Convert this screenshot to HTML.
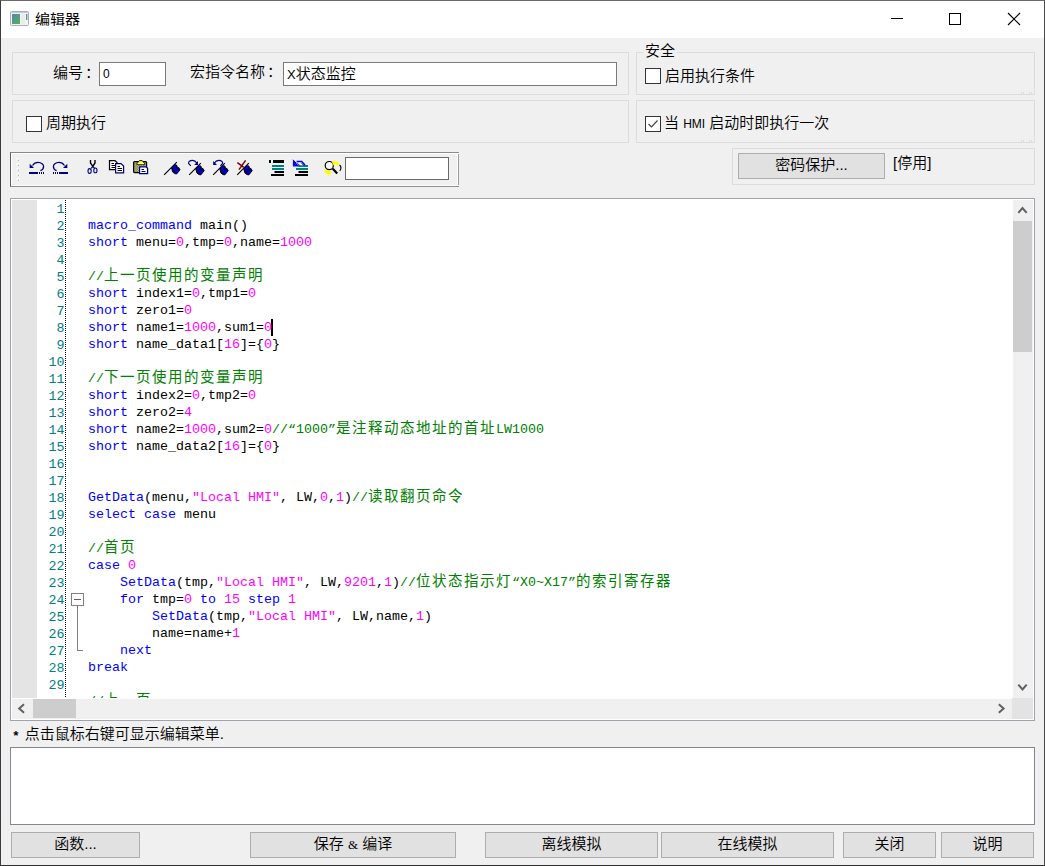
<!DOCTYPE html>
<html lang="zh-CN">
<head>
<meta charset="utf-8">
<title>编辑器</title>
<style>
*{box-sizing:border-box;margin:0;padding:0}
html,body{width:1045px;height:866px;overflow:hidden;background:#f0f0f0}
body{position:relative;font-family:"Liberation Sans","Noto Sans CJK SC",sans-serif;font-size:15px;color:#000;font-weight:350}
.abs{position:absolute}
.lat{font-size:12px;font-weight:400}
#frame{position:absolute;left:0;top:0;width:1045px;height:866px;border-left:1px solid #3c3c3c;border-top:1px solid #6b6b6b;border-right:1px solid #4a4a4a;border-bottom:1px solid #303030;pointer-events:none;z-index:50}
#titlebar{position:absolute;left:1px;top:1px;width:1043px;height:37px;background:#fff}
#title{position:absolute;left:35px;top:9px;font-size:15px;line-height:20px;font-weight:400;transform:scaleY(0.89);transform-origin:0 17.2px}
.grp{position:absolute;border:1px solid #dcdcdc}
.lbl{position:absolute;white-space:nowrap;line-height:18px;height:18px}
.inp{position:absolute;background:#fff;border:1px solid #7a7a7a}
.cb{position:absolute;width:16px;height:16px;background:#fff;border:1px solid #333}
.btn{position:absolute;background:#e1e1e1;border:1px solid #adadad;text-align:center;white-space:nowrap}
#toolbar{position:absolute;left:10px;top:152px;width:449px;height:35px;border-top:1px solid #8a8a8a;border-left:1px solid #606060;border-bottom:1px solid #8e8e8e;box-shadow:inset 1px 1px 0 #fff,inset 0 -1px 0 #fff}
#tbr{position:absolute;left:457px;top:154px;width:2px;height:31px;border-left:1px solid #fff;border-right:1px solid #9a9a9a}
#editor{position:absolute;left:10px;top:198px;width:1025px;height:523px;border:1px solid #a0a3ab;background:#fff;overflow:hidden}
#code{position:absolute;left:0;top:2px;width:1000px;font-family:"Liberation Mono","Noto Sans CJK SC",monospace;font-size:13.333px;font-weight:400}
.ln{position:relative;height:17px;line-height:17px;white-space:pre}
.n{position:absolute;left:0;width:53.5px;text-align:right;color:#008080;transform:translateY(0.4px) scaleY(0.9);transform-origin:0 12px}
.t{position:absolute;left:77px;transform:translateY(-0.7px) scaleY(0.92);transform-origin:0 12px}
.k{color:#0000ff}.m{color:#ff00ff}.c{color:#008000}
.z{font-size:14.5px;letter-spacing:1.5px;font-weight:400;position:relative;top:0.2px;display:inline-block;line-height:17px;vertical-align:baseline;transform:scaleY(1.087);transform-origin:0 12px}
#codeclip{position:absolute;left:0;top:0;width:1002px;height:499px;overflow:hidden}
.s{}
#gutter{position:absolute;left:1px;top:1px;width:25px;height:498px;background:#e4e4e4}
#dots{position:absolute;left:54px;top:1px;width:1px;height:498px;background:repeating-linear-gradient(to bottom,#000 0,#000 1px,#fff 1px,#fff 2px)}
#fold{position:absolute;left:60px;top:394px;width:13px;height:13px;border:1px solid #808080;background:#fff}
#fold i{position:absolute;left:2px;top:5px;width:7px;height:1px;background:#606060}
#foldv{position:absolute;left:66px;top:407px;width:1px;height:45px;background:#808080}
#foldh{position:absolute;left:66px;top:451px;width:6px;height:1px;background:#808080}
#caret{position:absolute;left:260px;top:120px;width:2px;height:17px;background:#000}
#vsb{position:absolute;left:1002px;top:1px;width:20px;height:498px;background:#f0f0f0}
#vthumb{position:absolute;left:0;top:21px;width:19px;height:131px;background:#cdcdcd}
#hsb{position:absolute;left:1px;top:500px;width:1001px;height:20px;background:#f0f0f0}
#hthumb{position:absolute;left:21px;top:0;width:43px;height:19px;background:#cdcdcd}
#corner{position:absolute;left:1001px;top:499px;width:21px;height:21px;background:#e3e3e3}
.arr{position:absolute;width:20px;height:20px}
#out{position:absolute;left:10px;top:747px;width:1025px;height:78px;border:1px solid #828790;background:#fff}
</style>
</head>
<body>
<div id="titlebar"></div>
<div id="title">编辑器</div>
<svg class="abs" style="left:0;top:0;z-index:5" width="1045" height="38" viewBox="0 0 1045 38">
<defs><linearGradient id="ig" x1="0" y1="0" x2="0.6" y2="1"><stop offset="0" stop-color="#5b80b8"/><stop offset="0.5" stop-color="#55988e"/><stop offset="1" stop-color="#58aa66"/></linearGradient>
<linearGradient id="ig2" x1="0" y1="0" x2="0" y2="1"><stop offset="0" stop-color="#5b86c4"/><stop offset="1" stop-color="#5aa860"/></linearGradient></defs>
<rect x="10.5" y="11.5" width="18" height="14" rx="1" fill="#f3f3f3" stroke="#a9b0bb" stroke-width="1"/>
<rect x="11" y="12" width="17" height="1" fill="#c4c9d0"/>
<rect x="12" y="14" width="8" height="10" fill="url(#ig)"/>
<rect x="21" y="14" width="4" height="10" fill="#ececec"/>
<rect x="26" y="14" width="1.4" height="6" fill="url(#ig2)"/>
<path d="M891 18.5 H903" stroke="#000" stroke-width="1" fill="none"/>
<rect x="949.5" y="13.5" width="11" height="11" fill="none" stroke="#000" stroke-width="1"/>
<path d="M1008 13 L1020 25 M1020 13 L1008 25" stroke="#000" stroke-width="1.1" fill="none"/>
</svg>
<div id="frame"></div>

<!-- top groups -->
<div class="grp" style="left:12px;top:52px;width:617px;height:43px"></div>
<div class="grp" style="left:12px;top:100px;width:617px;height:43px"></div>
<div class="grp" style="left:636px;top:52px;width:399px;height:43px"></div>
<div class="grp" style="left:636px;top:100px;width:399px;height:43px"></div>
<div class="grp" style="left:732px;top:148px;width:303px;height:37px"></div>

<i class="abs" style="left:1021px;top:92px;width:1px;height:2px;background:#dcdcdc"></i><i class="abs" style="left:1023px;top:92px;width:1px;height:2px;background:#dcdcdc"></i><i class="abs" style="left:1029px;top:92px;width:1px;height:2px;background:#dcdcdc"></i><i class="abs" style="left:1031px;top:92px;width:1px;height:2px;background:#dcdcdc"></i><i class="abs" style="left:1021px;top:140px;width:1px;height:2px;background:#dcdcdc"></i><i class="abs" style="left:1023px;top:140px;width:1px;height:2px;background:#dcdcdc"></i><i class="abs" style="left:1029px;top:140px;width:1px;height:2px;background:#dcdcdc"></i><i class="abs" style="left:1031px;top:140px;width:1px;height:2px;background:#dcdcdc"></i>
<div class="lbl" style="left:53px;top:64px">编号<span style="margin-left:2px">：</span></div>
<div class="inp" style="left:99px;top:62px;width:67px;height:24px"><span class="lbl lat" style="left:3px;top:2px">0</span></div>
<div class="lbl" style="left:190px;top:63px">宏指令名称<span style="margin-left:2px">：</span></div>
<div class="inp" style="left:283px;top:62px;width:334px;height:24px"><span class="lbl" style="left:3px;top:2px"><span class="lat" style="font-size:13px">X</span>状态监控</span></div>

<div class="lbl" style="left:643px;top:42px;background:#f0f0f0;padding:0 2px">安全</div>
<div class="cb" style="left:645px;top:68px"></div>
<div class="lbl" style="left:665px;top:67px">启用执行条件</div>
<div class="cb" style="left:645px;top:116px"><svg class="abs" style="left:0;top:0" width="14" height="14" viewBox="0 0 14 14"><path d="M2.5 7 L5.5 10 L11.5 3.5" fill="none" stroke="#444" stroke-width="1.2"/></svg></div>
<div class="lbl" style="left:664px;top:114px">当 <span class="lat">HMI</span> 启动时即执行一次</div>
<div class="cb" style="left:26px;top:116px"></div>
<div class="lbl" style="left:46px;top:114px">周期执行</div>

<div class="btn" style="left:738px;top:153px;width:147px;height:26px;line-height:22px">密码保护...</div>
<div class="lbl" style="left:893px;top:154px">[停用]</div>

<div id="toolbar"></div><div id="tbr"></div>
<!--TB-->
<svg id="tb" class="abs" style="left:10px;top:152px" width="449" height="35" viewBox="10 152 449 35">
<!-- gripper -->
<g><rect x="16.5" y="158" width="3" height="3" fill="#fafafa"/><path d="M17.4 160.8 L19 159.2 L19 160.8 Z" fill="#9c9c9c"/><rect x="16.5" y="163" width="3" height="3" fill="#fafafa"/><path d="M17.4 165.8 L19 164.2 L19 165.8 Z" fill="#9c9c9c"/><rect x="16.5" y="168" width="3" height="3" fill="#fafafa"/><path d="M17.4 170.8 L19 169.2 L19 170.8 Z" fill="#9c9c9c"/><rect x="16.5" y="173" width="3" height="3" fill="#fafafa"/><path d="M17.4 175.8 L19 174.2 L19 175.8 Z" fill="#9c9c9c"/><rect x="16.5" y="178" width="3" height="3" fill="#fafafa"/><path d="M17.4 180.8 L19 179.2 L19 180.8 Z" fill="#9c9c9c"/></g>
<!-- undo -->
<g id="undo" fill="#000080" stroke="none">
<rect x="29" y="172" width="9" height="2"/><rect x="39" y="172" width="1" height="2"/><rect x="41" y="172" width="1" height="2"/><rect x="43" y="172" width="1" height="2"/>
<path d="M29.7 163.8 L34 168 L29.7 168 Z"/>
<path d="M32.5 165.5 C34 163.2 36 162.4 38 162.4 C41.5 162.4 43.6 164.6 43.6 166.6 C43.6 168.6 42.4 170 40.4 170.6" fill="none" stroke="#000080" stroke-width="1.3"/>
</g>
<!-- redo -->
<g fill="#000080" stroke="none" transform="translate(97 0) scale(-1 1)">
<rect x="29" y="172" width="9" height="2"/><rect x="39" y="172" width="1" height="2"/><rect x="41" y="172" width="1" height="2"/><rect x="43" y="172" width="1" height="2"/>
<path d="M29.7 163.8 L34 168 L29.7 168 Z"/>
<path d="M32.5 165.5 C34 163.2 36 162.4 38 162.4 C41.5 162.4 43.6 164.6 43.6 166.6 C43.6 168.6 42.4 170 40.4 170.6" fill="none" stroke="#000080" stroke-width="1.3"/>
</g>
<!-- cut -->
<g fill="none" stroke-width="1.2">
<path d="M90.5 160 V163 L92.8 166.4 M95 160 V163 L92.8 166.4" stroke="#000" stroke-width="1.4"/>
<path d="M92.8 166.4 L91.2 168.4 M92.8 166.4 L94.4 168.2" stroke="#000080"/>
<ellipse cx="89.6" cy="171" rx="1.6" ry="2.4" stroke="#000080" stroke-width="1.1"/>
<ellipse cx="95.4" cy="170.4" rx="1.6" ry="2.4" stroke="#000080" stroke-width="1.1"/>
</g>
<!-- copy -->
<g stroke-width="1.2">
<path d="M109.5 160.6 H115 L117 162.6 V169.6 H109.5 Z" fill="#fff" stroke="#000"/>
<path d="M111.5 163.5 H114 M111.5 165.5 H115 M111.5 167.5 H115" stroke="#000" stroke-width="1"/>
<path d="M115.6 163.6 H121 L123.6 166 V172.8 H115.6 Z" fill="#fff" stroke="#000080"/>
<path d="M117.5 166.5 H120 M117.5 168.5 H122 M117.5 170.5 H122" stroke="#000" stroke-width="1"/>
</g>
<!-- paste -->
<g stroke-width="1.2">
<defs><pattern id="dth" x="133" y="161" width="2.5" height="2.5" patternUnits="userSpaceOnUse"><rect width="2.5" height="2.5" fill="#808000"/><rect width="1.25" height="1.25" fill="#c0c0c0"/><rect x="1.25" y="1.25" width="1.25" height="1.25" fill="#c0c0c0"/></pattern></defs><rect x="133.6" y="161.6" width="13" height="11" rx="1" fill="url(#dth)" stroke="#000"/>
<path d="M137 164.6 V163.4 L139.4 160.6 H142.2 L144.6 163.4 V164.6 Z" fill="#ffff00" stroke="#000" stroke-width="0.9"/>
<rect x="137.8" y="163" width="6" height="1.2" fill="#fff" stroke="none"/>
<path d="M139.6 166.8 H146 L147.6 168.2 V173.6 H139.6 Z" fill="#fff" stroke="#000080"/>
<path d="M141.5 169.5 H144 M141.5 171.5 H145.5" stroke="#000080" stroke-width="1"/>
</g>
<!-- bookmarks -->
<path d="M164.1 174.8 L176.8 162.1" stroke="#000" stroke-width="1.1" fill="none"/>
<g transform="translate(0 0)"><path d="M171.6 168 L175.6 164.6 L177 165.6 L177.2 167.4 L178.8 167.6 L180 169.8 L176.6 174 L174.6 173.6 L172.6 172 Z" fill="#000078" stroke="#000" stroke-width="0.9" stroke-linejoin="round"/>
<path d="M173 168.4 L175.8 166 M175.6 172.2 L178.6 169.8" stroke="#0000ff" stroke-width="1.7" fill="none"/></g>
<path d="M189.2 174.8 L200.8 163.1" stroke="#000" stroke-width="1.1" fill="none"/>
<g transform="translate(24.2 0.9)"><path d="M171.6 168 L175.6 164.6 L177 165.6 L177.2 167.4 L178.8 167.6 L180 169.8 L176.6 174 L174.6 173.6 L172.6 172 Z" fill="#000078" stroke="#000" stroke-width="0.9" stroke-linejoin="round"/>
<path d="M173 168.4 L175.8 166 M175.6 172.2 L178.6 169.8" stroke="#0000ff" stroke-width="1.7" fill="none"/></g>
<path d="M190.8 165.8 L188.6 163.4 C188.2 161.6 190 160.4 192.4 160.4 C194.6 160.4 196 161.6 197 163.2" fill="none" stroke="#000080" stroke-width="1.1"/>
<path d="M194.2 164.9 L198 164.9 L198 160.9 Z" fill="#000080"/>
<path d="M213.2 174.8 L224.8 163.1" stroke="#000" stroke-width="1.1" fill="none"/>
<g transform="translate(48.2 0.9)"><path d="M171.6 168 L175.6 164.6 L177 165.6 L177.2 167.4 L178.8 167.6 L180 169.8 L176.6 174 L174.6 173.6 L172.6 172 Z" fill="#000078" stroke="#000" stroke-width="0.9" stroke-linejoin="round"/>
<path d="M173 168.4 L175.8 166 M175.6 172.2 L178.6 169.8" stroke="#0000ff" stroke-width="1.7" fill="none"/></g>
<path d="M220.4 165.8 L222.6 163.4 C223 161.6 221.2 160.4 218.8 160.4 C216.6 160.4 215.2 161.6 214.2 163.2" fill="none" stroke="#000080" stroke-width="1.1"/>
<path d="M217 164.9 L213.2 164.9 L213.2 160.9 Z" fill="#000080"/>
<path d="M237.2 174.8 L248.8 163.1" stroke="#000" stroke-width="1.1" fill="none"/>
<g transform="translate(72.2 0.9)"><path d="M171.6 168 L175.6 164.6 L177 165.6 L177.2 167.4 L178.8 167.6 L180 169.8 L176.6 174 L174.6 173.6 L172.6 172 Z" fill="#000078" stroke="#000" stroke-width="0.9" stroke-linejoin="round"/>
<path d="M173 168.4 L175.8 166 M175.6 172.2 L178.6 169.8" stroke="#0000ff" stroke-width="1.7" fill="none"/></g>
<path d="M237.4 162.6 L243.8 167.4 M245.6 160.4 L239 169.6" stroke="#800000" stroke-width="1.5" fill="none"/>
<!-- indent -->
<g>
<rect x="269" y="160" width="2" height="3" fill="#000"/>
<rect x="273" y="160" width="11" height="3" fill="#000"/>
<rect x="272" y="165" width="12" height="2" fill="#008080"/>
<rect x="272" y="168" width="12" height="2" fill="#008080"/>
<rect x="274.5" y="171" width="9.5" height="2" fill="#000"/>
<rect x="271" y="174" width="13" height="2" fill="#000"/>
</g>
<!-- unindent -->
<g>
<rect x="298.5" y="165" width="9.5" height="2" fill="#008080"/>
<rect x="296" y="168" width="12" height="2" fill="#008080"/>
<rect x="298.5" y="171" width="9.5" height="2" fill="#000"/>
<rect x="295" y="174" width="13" height="2" fill="#000"/>
<path d="M298 163.4 H301.8 L303.6 165.2 H299.6 Z" fill="#fff"/>
<path d="M292.9 159.7 L292.9 166.6 L299.5 166.6 Z" fill="#0000ff"/>
<path d="M296.6 161.5 H301.7 L305 165" stroke="#0000ff" stroke-width="1.5" fill="none"/>
<path d="M293 159.8 L296.4 163.2 M297.4 163.2 L299.6 165.4 M301.6 163.2 L304 165.6" stroke="#000" stroke-width="0.9" fill="none"/>
</g>
<!-- find -->
<g>
<circle cx="329.3" cy="165.6" r="4.1" fill="#f8f8f8" stroke="#000" stroke-width="1.2"/>
<path d="M332.8 168.8 L337.2 173.4" stroke="#000" stroke-width="2.2" fill="none"/>
<path d="M332 162.6 L334.6 160 L334.8 161.8 L338 161.4 L339.2 164.6 L337.2 166 L335.6 163.8 L334 166 Z" fill="#ffff00"/>
<path d="M324 169.4 L326 169.6 L327.6 171.6 L330 170.2 L332 171.6 L328.6 176.2 L328 174.2 L324.6 172.8 Z" fill="#ffff00"/>
<path d="M339.6 165 C341.2 166.6 341.2 169 339.8 170.8" stroke="#000" stroke-width="1.1" fill="none"/>
</g>
<!-- search box -->
<rect x="345.5" y="157.5" width="103" height="22" fill="#fff" stroke="#6a6a6a" stroke-width="1"/>
</svg>
<!--/TB-->

<div id="editor">
<div id="gutter"></div>
<div id="dots"></div>
<div id="fold"><i></i></div><div id="foldv"></div><div id="foldh"></div>
<div id="caret"></div>
<div id="vsb"><div id="vthumb"></div>
<svg class="arr" style="left:0;top:0" viewBox="0 0 20 20"><path d="M5.3 12.8 L9.5 8 L13.7 12.8" fill="none" stroke="#606060" stroke-width="2"/></svg>
<svg class="arr" style="left:0;top:478px" viewBox="0 0 20 20"><path d="M5.3 6.7 L9.5 11.5 L13.7 6.7" fill="none" stroke="#606060" stroke-width="2"/></svg>
</div>
<div id="hsb"><div id="hthumb"></div>
<svg class="arr" style="left:0;top:0" viewBox="0 0 20 20"><path d="M12 5.3 L7.2 9.5 L12 13.7" fill="none" stroke="#606060" stroke-width="2"/></svg>
<svg class="arr" style="left:981px;top:0" viewBox="0 0 20 20"><path d="M5.8 5.3 L10.6 9.5 L5.8 13.7" fill="none" stroke="#606060" stroke-width="2"/></svg>
</div>
<div id="corner"></div>
<div id="codeclip"><div id="code">
<div class="ln"><span class="n">1</span><span class="t"></span></div>
<div class="ln"><span class="n">2</span><span class="t"><span class="k">macro_command</span> main()</span></div>
<div class="ln"><span class="n">3</span><span class="t"><span class="k">short</span> menu=<span class="m">0</span>,tmp=<span class="m">0</span>,name=<span class="m">1000</span></span></div>
<div class="ln"><span class="n">4</span><span class="t"></span></div>
<div class="ln"><span class="n">5</span><span class="t"><span class="c">//<span class="z">上一页使用的变量声明</span></span></span></div>
<div class="ln"><span class="n">6</span><span class="t"><span class="k">short</span> index1=<span class="m">0</span>,tmp1=<span class="m">0</span></span></div>
<div class="ln"><span class="n">7</span><span class="t"><span class="k">short</span> zero1=<span class="m">0</span></span></div>
<div class="ln"><span class="n">8</span><span class="t"><span class="k">short</span> name1=<span class="m">1000</span>,sum1=<span class="m">0</span></span></div>
<div class="ln"><span class="n">9</span><span class="t"><span class="k">short</span> name_data1[<span class="m">16</span>]={<span class="m">0</span>}</span></div>
<div class="ln"><span class="n">10</span><span class="t"></span></div>
<div class="ln"><span class="n">11</span><span class="t"><span class="c">//<span class="z">下一页使用的变量声明</span></span></span></div>
<div class="ln"><span class="n">12</span><span class="t"><span class="k">short</span> index2=<span class="m">0</span>,tmp2=<span class="m">0</span></span></div>
<div class="ln"><span class="n">13</span><span class="t"><span class="k">short</span> zero2=<span class="m">4</span></span></div>
<div class="ln"><span class="n">14</span><span class="t"><span class="k">short</span> name2=<span class="m">1000</span>,sum2=<span class="m">0</span><span class="c">//<span class="s">“1000”</span><span class="z">是注释动态地址的首址</span><span class="s">LW1000</span></span></span></div>
<div class="ln"><span class="n">15</span><span class="t"><span class="k">short</span> name_data2[<span class="m">16</span>]={<span class="m">0</span>}</span></div>
<div class="ln"><span class="n">16</span><span class="t"></span></div>
<div class="ln"><span class="n">17</span><span class="t"></span></div>
<div class="ln"><span class="n">18</span><span class="t"><span class="k">GetData</span>(menu,<span class="m">"Local HMI"</span>, LW,<span class="m">0</span>,<span class="m">1</span>)<span class="c">//<span class="z">读取翻页命令</span></span></span></div>
<div class="ln"><span class="n">19</span><span class="t"><span class="k">select</span> <span class="k">case</span> menu</span></div>
<div class="ln"><span class="n">20</span><span class="t"></span></div>
<div class="ln"><span class="n">21</span><span class="t"><span class="c">//<span class="z">首页</span></span></span></div>
<div class="ln"><span class="n">22</span><span class="t"><span class="k">case</span> <span class="m">0</span></span></div>
<div class="ln"><span class="n">23</span><span class="t">    <span class="k">SetData</span>(tmp,<span class="m">"Local HMI"</span>, LW,<span class="m">9201</span>,<span class="m">1</span>)<span class="c">//<span class="z">位状态指示灯</span><span class="s">“X0~X17”</span><span class="z">的索引寄存器</span></span></span></div>
<div class="ln"><span class="n">24</span><span class="t">    <span class="k">for</span> tmp=<span class="m">0</span> <span class="k">to</span> <span class="m">15</span> <span class="k">step</span> <span class="m">1</span></span></div>
<div class="ln"><span class="n">25</span><span class="t">        <span class="k">SetData</span>(tmp,<span class="m">"Local HMI"</span>, LW,name,<span class="m">1</span>)</span></div>
<div class="ln"><span class="n">26</span><span class="t">        name=name+<span class="m">1</span></span></div>
<div class="ln"><span class="n">27</span><span class="t">    <span class="k">next</span></span></div>
<div class="ln"><span class="n">28</span><span class="t"><span class="k">break</span></span></div>
<div class="ln"><span class="n">29</span><span class="t"></span></div>
<div class="ln"><span class="n"></span><span class="t"><span class="c">//<span class="z">上一页</span></span></span></div>
</div></div>
</div>

<div class="lbl" style="left:12px;top:725px"><span style="font-family:'Liberation Mono',monospace;font-size:13px;font-weight:700;position:relative;top:1px;margin-right:5px">*</span>点击鼠标右键可显示编辑菜单.</div>
<div id="out"></div>

<div class="btn" style="left:11px;top:832px;width:129px;height:26px;line-height:22px">函数...</div>
<div class="btn" style="left:250px;top:832px;width:206px;height:26px;line-height:22px">保存 <span class="lat" style="font-family:'Liberation Serif',serif;font-size:13px">&amp;</span> 编译</div>
<div class="btn" style="left:485px;top:832px;width:173px;height:26px;line-height:22px">离线模拟</div>
<div class="btn" style="left:661px;top:832px;width:173px;height:26px;line-height:22px">在线模拟</div>
<div class="btn" style="left:843px;top:832px;width:93px;height:26px;line-height:22px">关闭</div>
<div class="btn" style="left:941px;top:832px;width:93px;height:26px;line-height:22px">说明</div>
</body>
</html>
